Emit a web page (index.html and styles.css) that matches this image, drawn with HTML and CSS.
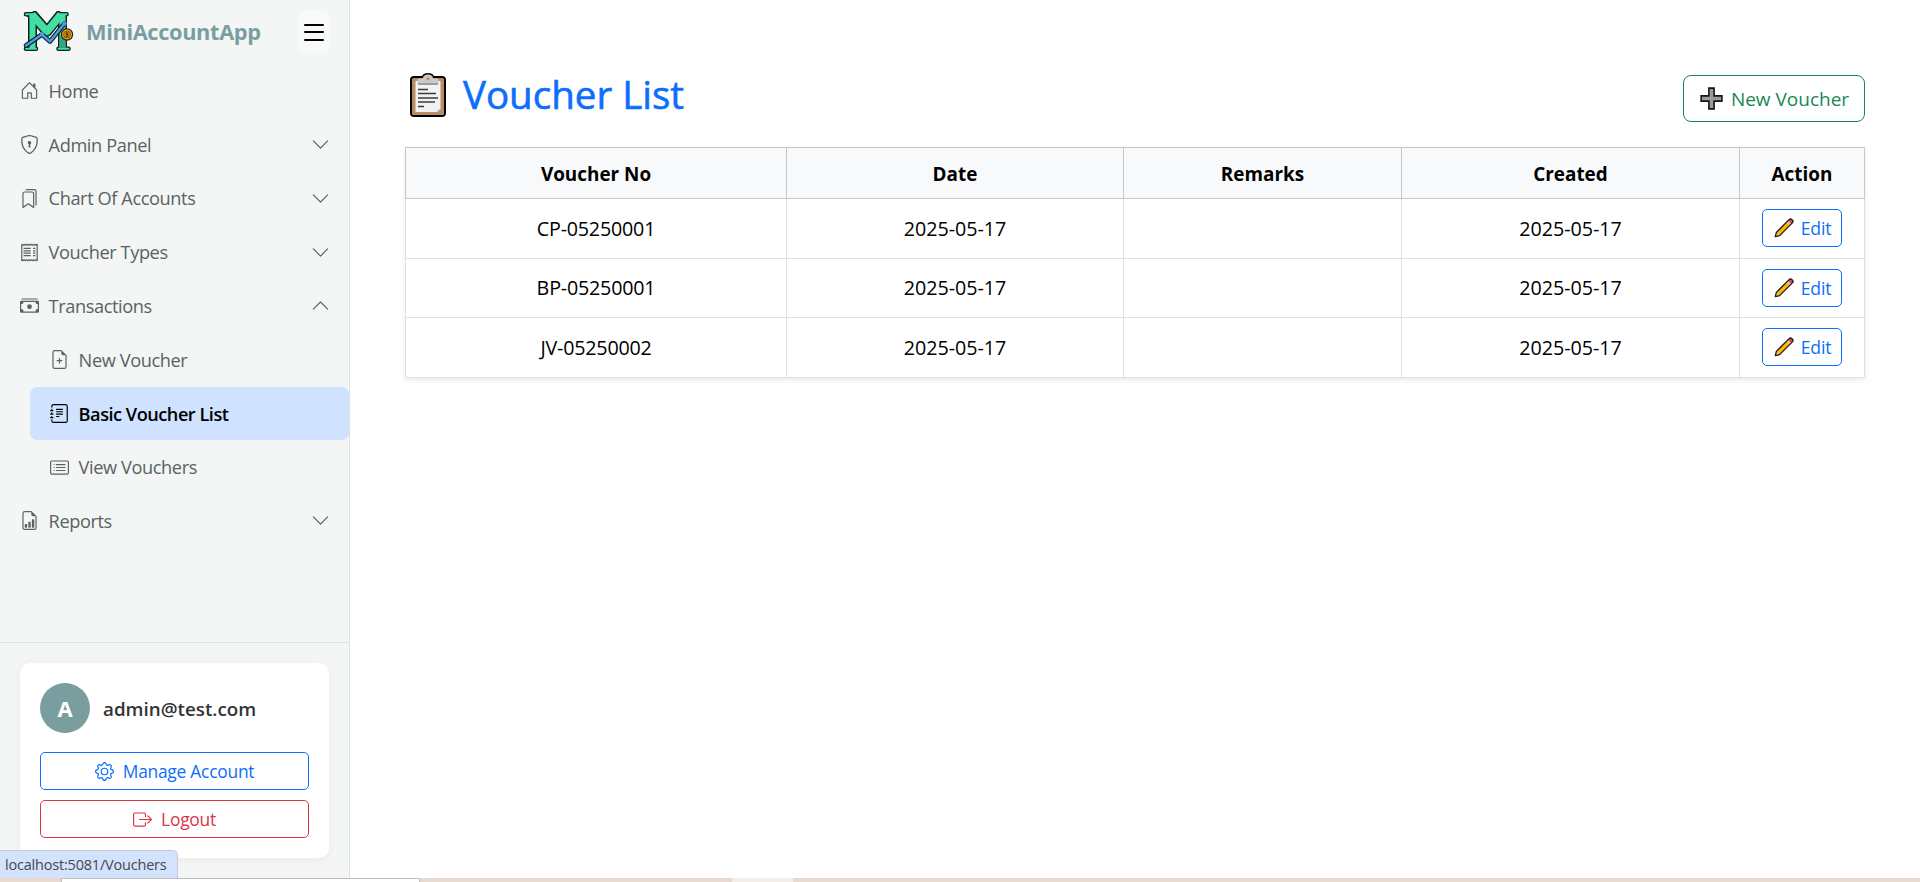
FILE: index.html
```html
<!DOCTYPE html>
<html lang="en">
<head>
<meta charset="utf-8">
<title>Voucher List - MiniAccountApp</title>
<link rel="stylesheet" href="styles.css">
</head>
<body>
<svg class="sprite" aria-hidden="true">
  <symbol id="i-home" viewBox="0 0 16 16"><path d="M8.354 1.146a.5.5 0 0 0-.708 0l-6 6A.5.5 0 0 0 1.5 7.5v7a.5.5 0 0 0 .5.5h4.5a.5.5 0 0 0 .5-.5v-4h2v4a.5.5 0 0 0 .5.5H14a.5.5 0 0 0 .5-.5v-7a.5.5 0 0 0-.146-.354L13 5.793V2.5a.5.5 0 0 0-.5-.5h-1a.5.5 0 0 0-.5.5v1.293zM2.5 14V7.707l5.5-5.5 5.5 5.5V14H10v-4a.5.5 0 0 0-.5-.5h-3a.5.5 0 0 0-.5.5v4z"/></symbol>
  <symbol id="i-shield" viewBox="0 0 16 16"><path d="M5.338 1.59a61 61 0 0 0-2.837.856.48.48 0 0 0-.328.39c-.554 4.157.726 7.19 2.253 9.188a10.7 10.7 0 0 0 2.287 2.233c.346.244.652.42.893.533q.18.085.293.118a1 1 0 0 0 .101.025 1 1 0 0 0 .1-.025q.114-.034.294-.118c.24-.113.547-.29.893-.533a10.7 10.7 0 0 0 2.287-2.233c1.527-1.997 2.807-5.031 2.253-9.188a.48.48 0 0 0-.328-.39c-.651-.213-1.75-.56-2.837-.855C9.552 1.29 8.531 1.067 8 1.067c-.53 0-1.552.223-2.662.524zM5.072.56C6.157.265 7.31 0 8 0s1.843.265 2.928.56c1.11.3 2.229.655 2.887.87a1.54 1.54 0 0 1 1.044 1.262c.596 4.477-.787 7.795-2.465 9.99a11.8 11.8 0 0 1-2.517 2.453 7 7 0 0 1-1.048.625c-.28.132-.581.24-.829.24s-.548-.108-.829-.24a7 7 0 0 1-1.048-.625 11.8 11.8 0 0 1-2.517-2.453C1.928 10.487.545 7.169 1.141 2.692A1.54 1.54 0 0 1 2.185 1.43 63 63 0 0 1 5.072.56"/><path d="M9.5 6.5a1.5 1.5 0 0 1-1 1.415l.385 1.99a.5.5 0 0 1-.491.595h-.788a.5.5 0 0 1-.49-.595l.384-1.99a1.5 1.5 0 1 1 2-1.415"/></symbol>
  <symbol id="i-bookmarks" viewBox="0 0 16 16"><path d="M2 4a2 2 0 0 1 2-2h6a2 2 0 0 1 2 2v11.5a.5.5 0 0 1-.777.416L7 13.101l-4.223 2.815A.5.5 0 0 1 2 15.5zm2-1a1 1 0 0 0-1 1v10.566l3.723-2.482a.5.5 0 0 1 .554 0L11 14.566V4a1 1 0 0 0-1-1z"/><path d="M4.268 1H12a1 1 0 0 1 1 1v11.768l.223.148A.5.5 0 0 0 14 13.5V2a2 2 0 0 0-2-2H6a2 2 0 0 0-1.732 1"/></symbol>
  <symbol id="i-receipt" viewBox="0 0 16 16"><path fill="none" stroke="currentColor" stroke-linejoin="round" d="M1.5 1.2l1 .8 1-.9 1 .9 1-.9 1 .9 1-.9 1 .9 1-.9 1 .9 1-.9 1 .9 1-.9.5.8.5-.7v13.6l-1-.8-1 .9-1-.9-1 .9-1-.9-1 .9-1-.9-1 .9-1-.9-1 .9-1-.9-1 .9-.5-.7-.5.6z"/><path d="M3 4h6v1.100H3zM3 6h6v1.100H3zM3 8h6v1.100H3zM3 10h6v1.100H3zM11 4h2v1.100h-2zM11 6h2v1.100h-2zM11 8h2v1.100h-2zM11 10h2v1.100h-2z"/></symbol>
  <symbol id="i-cash" viewBox="0 0 16 16"><path d="M1 3a1 1 0 0 1 1-1h12a1 1 0 0 1 1 1zm7 8a2 2 0 1 0 0-4 2 2 0 0 0 0 4"/><path d="M0 5a1 1 0 0 1 1-1h14a1 1 0 0 1 1 1v8a1 1 0 0 1-1 1H1a1 1 0 0 1-1-1zm3 0a2 2 0 0 1-2 2v4a2 2 0 0 1 2 2h10a2 2 0 0 1 2-2V7a2 2 0 0 1-2-2z"/></symbol>
  <symbol id="i-file-plus" viewBox="0 0 16 16"><path d="M8 6.5a.5.5 0 0 1 .5.5v1.5H10a.5.5 0 0 1 0 1H8.5V11a.5.5 0 0 1-1 0V9.5H6a.5.5 0 0 1 0-1h1.5V7a.5.5 0 0 1 .5-.5"/><path d="M14 4.5V14a2 2 0 0 1-2 2H4a2 2 0 0 1-2-2V2a2 2 0 0 1 2-2h5.5zm-3 0A1.5 1.5 0 0 1 9.5 3V1H4a1 1 0 0 0-1 1v12a1 1 0 0 0 1 1h8a1 1 0 0 0 1-1V4.5z"/></symbol>
  <symbol id="i-journal" viewBox="0 0 16 16"><path d="M5 10.5a.5.5 0 0 1 .5-.5h2a.5.5 0 0 1 0 1h-2a.5.5 0 0 1-.5-.5m0-2a.5.5 0 0 1 .5-.5h5a.5.5 0 0 1 0 1h-5a.5.5 0 0 1-.5-.5m0-2a.5.5 0 0 1 .5-.5h5a.5.5 0 0 1 0 1h-5a.5.5 0 0 1-.5-.5m0-2a.5.5 0 0 1 .5-.5h5a.5.5 0 0 1 0 1h-5a.5.5 0 0 1-.5-.5"/><path d="M3 0h10a2 2 0 0 1 2 2v12a2 2 0 0 1-2 2H3a2 2 0 0 1-2-2v-1h1v1a1 1 0 0 0 1 1h10a1 1 0 0 0 1-1V2a1 1 0 0 0-1-1H3a1 1 0 0 0-1 1v1H1V2a2 2 0 0 1 2-2"/><path d="M1 5v-.5a.5.5 0 0 1 1 0V5h.5a.5.5 0 0 1 0 1h-2a.5.5 0 0 1 0-1zm0 3v-.5a.5.5 0 0 1 1 0V8h.5a.5.5 0 0 1 0 1h-2a.5.5 0 0 1 0-1zm0 3v-.5a.5.5 0 0 1 1 0v.5h.5a.5.5 0 0 1 0 1h-2a.5.5 0 0 1 0-1z"/></symbol>
  <symbol id="i-card-list" viewBox="0 0 16 16"><rect x=".5" y="2.5" width="15" height="11" rx="1" fill="none" stroke="currentColor"/><path d="M5 5h8v1H5zM5 7.5h8v1H5zM5 10h8v1H5z"/><circle cx="3.5" cy="5.5" r=".5"/><circle cx="3.5" cy="8" r=".5"/><circle cx="3.5" cy="10.5" r=".5"/></symbol>
  <symbol id="i-report" viewBox="0 0 16 16"><path d="M10 13.5a.5.5 0 0 0 .5.5h1a.5.5 0 0 0 .5-.5v-6a.5.5 0 0 0-.5-.5h-1a.5.5 0 0 0-.5.5zm-2.5.5a.5.5 0 0 1-.5-.5v-4a.5.5 0 0 1 .5-.5h1a.5.5 0 0 1 .5.5v4a.5.5 0 0 1-.5.5zm-3 0a.5.5 0 0 1-.5-.5v-2a.5.5 0 0 1 .5-.5h1a.5.5 0 0 1 .5.5v2a.5.5 0 0 1-.5.5z"/><path d="M14 14V4.5L9.5 0H4a2 2 0 0 0-2 2v12a2 2 0 0 0 2 2h8a2 2 0 0 0 2-2M9.5 3A1.5 1.5 0 0 0 11 4.5h2V14a1 1 0 0 1-1 1H4a1 1 0 0 1-1-1V2a1 1 0 0 1 1-1h5.500z"/></symbol>
  <symbol id="i-down" viewBox="0 0 16 16"><path d="M1.646 4.646a.5.5 0 0 1 .708 0L8 10.293l5.646-5.647a.5.5 0 0 1 .708.708l-6 6a.5.5 0 0 1-.708 0l-6-6a.5.5 0 0 1 0-.708"/></symbol>
  <symbol id="i-gear" viewBox="0 0 16 16"><path d="M8 4.754a3.246 3.246 0 1 0 0 6.492 3.246 3.246 0 0 0 0-6.492M5.754 8a2.246 2.246 0 1 1 4.492 0 2.246 2.246 0 0 1-4.492 0"/><path d="M9.796 1.343c-.527-1.79-3.065-1.79-3.592 0l-.094.319a.873.873 0 0 1-1.255.52l-.292-.16c-1.64-.892-3.433.902-2.54 2.541l.159.292a.873.873 0 0 1-.52 1.255l-.319.094c-1.79.527-1.79 3.065 0 3.592l.319.094a.873.873 0 0 1 .52 1.255l-.16.292c-.892 1.64.901 3.434 2.541 2.54l.292-.159a.873.873 0 0 1 1.255.52l.094.319c.527 1.79 3.065 1.79 3.592 0l.094-.319a.873.873 0 0 1 1.255-.52l.292.16c1.64.893 3.434-.902 2.54-2.541l-.159-.292a.873.873 0 0 1 .52-1.255l.319-.094c1.79-.527 1.79-3.065 0-3.592l-.319-.094a.873.873 0 0 1-.52-1.255l.16-.292c.893-1.64-.902-3.433-2.541-2.54l-.292.159a.873.873 0 0 1-1.255-.52zm-2.633.283c.246-.835 1.428-.835 1.674 0l.094.319a1.873 1.873 0 0 0 2.693 1.115l.291-.16c.764-.415 1.6.42 1.184 1.185l-.159.292a1.873 1.873 0 0 0 1.116 2.692l.318.094c.835.246.835 1.428 0 1.674l-.319.094a1.873 1.873 0 0 0-1.115 2.693l.16.291c.415.764-.42 1.6-1.185 1.184l-.291-.159a1.873 1.873 0 0 0-2.693 1.116l-.094.318c-.246.835-1.428.835-1.674 0l-.094-.319a1.873 1.873 0 0 0-2.692-1.115l-.292.16c-.764.415-1.6-.42-1.184-1.185l.159-.291A1.873 1.873 0 0 0 1.945 8.93l-.319-.094c-.835-.246-.835-1.428 0-1.674l.319-.094A1.873 1.873 0 0 0 3.06 4.377l-.16-.292c-.415-.764.42-1.6 1.185-1.184l.292.159a1.873 1.873 0 0 0 2.692-1.115z"/></symbol>
  <symbol id="i-logout" viewBox="0 0 16 16"><path d="M10 12.500a.5.5 0 0 1-.5.5h-8a.5.5 0 0 1-.5-.5v-9a.5.5 0 0 1 .5-.5h8a.5.5 0 0 1 .5.5v2a.5.5 0 0 0 1 0v-2A1.5 1.5 0 0 0 9.500 2h-8A1.500 1.500 0 0 0 0 3.500v9A1.500 1.500 0 0 0 1.500 14h8a1.500 1.500 0 0 0 1.500-1.500v-2a.5.5 0 0 0-1 0z"/><path d="M15.854 8.354a.5.5 0 0 0 0-.708l-3-3a.5.5 0 0 0-.708.708L14.293 7.500H5.500a.5.5 0 0 0 0 1h8.793l-2.147 2.146a.5.5 0 0 0 .708.708z"/></symbol>
  <symbol id="i-pencil" viewBox="0 0 20 20"><g transform="rotate(-45 10 10)"><path d="M-2.300 10L1.500 7.700H19.500a2 2 0 0 1 2 2v.6a2 2 0 0 1-2 2H1.500z" fill="#fdb900"/><path d="M-2.300 10L1.500 7.700v4.600z" fill="#e8c9a8"/><path d="M16 7.700h2v4.600h-2z" fill="#d0d0d0"/><path d="M18 7.700h1.500a2 2 0 0 1 2 2v.6a2 2 0 0 1-2 2H18z" fill="#e74856"/><path d="M-2.300 10L1.500 7.700H19.500a2 2 0 0 1 2 2v.6a2 2 0 0 1-2 2H1.500z" fill="none" stroke="#1b1b1b" stroke-width="1.300" stroke-linejoin="round"/></g></symbol>
</svg>

<div class="app">
  <aside class="sidebar">
    <header class="brand-bar">
      <svg class="logo" viewBox="0 0 52 42">
        <g fill="none" stroke="#14201c" stroke-linejoin="round">
          <path d="M10.500 4v35M40.500 4v35" stroke-width="9"/>
          <path d="M9 2L25 20.500 40 2" stroke-width="10.500"/>
          <path d="M4 3.300h8M38 3.300h6.500M4 37.800h10M36.500 37.800h10" stroke-width="4.600" stroke-linecap="round"/>
        </g>
        <g fill="none" stroke="#40e0a3" stroke-linejoin="round">
          <path d="M10.500 3.500v34.500M40.500 3.500v34.500" stroke-width="6"/>
          <path d="M10 3.500L25 20.500 39 3.500" stroke-width="7.500"/>
          <path d="M4 3.300h8M38 3.300h6.500M4 37.800h10M36.500 37.800h10" stroke-width="2" stroke-linecap="round"/>
        </g>
        <path d="M37.500 24v13h6V29z" fill="#31a884"/>
        <path d="M4 34.500L20 23.500l8 7L42.500 12.500" fill="none" stroke="#101d2c" stroke-width="4.600" stroke-linecap="round" stroke-linejoin="round"/>
        <path d="M4 34.500L20 23.500l8 7L42.500 12.500" fill="none" stroke="#4a9de0" stroke-width="2.500" stroke-linecap="round" stroke-linejoin="round"/>
        <circle cx="20" cy="23" r="2" fill="#4a9de0"/><circle cx="42.500" cy="12.500" r="2.200" fill="#4a9de0"/>
        <circle cx="45" cy="23.500" r="5.600" fill="#f0ad1c" stroke="#2b2410" stroke-width="1.200"/>
        <circle cx="45" cy="23.500" r="3.500" fill="#d6920c" stroke="#6b4a05" stroke-width=".8"/>
        <path d="M46.500 22h-2.300q-1 .8 0 1.500h1.600q1 .7 0 1.600h-2.300M45 21v5" fill="none" stroke="#3c2b05" stroke-width=".8"/>
      </svg>
      <span class="brand">MiniAccountApp</span>
      <button class="menu-toggle" aria-label="Menu"><span class="bar"></span><span class="bar"></span><span class="bar"></span></button>
    </header>

    <nav class="nav">
      <a class="item"><svg class="icon"><use href="#i-home"/></svg><span>Home</span></a>
      <a class="item"><svg class="icon"><use href="#i-shield"/></svg><span>Admin Panel</span><svg class="icon chevron"><use href="#i-down"/></svg></a>
      <a class="item"><svg class="icon"><use href="#i-bookmarks"/></svg><span>Chart Of Accounts</span><svg class="icon chevron"><use href="#i-down"/></svg></a>
      <a class="item"><svg class="icon"><use href="#i-receipt"/></svg><span>Voucher Types</span><svg class="icon chevron"><use href="#i-down"/></svg></a>
      <a class="item"><svg class="icon"><use href="#i-cash"/></svg><span>Transactions</span><svg class="icon chevron open"><use href="#i-down"/></svg></a>
      <div class="submenu">
        <a class="item"><svg class="icon"><use href="#i-file-plus"/></svg><span>New Voucher</span></a>
        <a class="item active"><svg class="icon"><use href="#i-journal"/></svg><span>Basic Voucher List</span></a>
        <a class="item"><svg class="icon"><use href="#i-card-list"/></svg><span>View Vouchers</span></a>
      </div>
      <a class="item"><svg class="icon"><use href="#i-report"/></svg><span>Reports</span><svg class="icon chevron"><use href="#i-down"/></svg></a>
    </nav>

    <footer class="account">
      <div class="card">
        <div class="user"><span class="avatar">A</span><span class="email">admin@test.com</span></div>
        <button class="btn btn-primary"><svg class="icon"><use href="#i-gear"/></svg><span>Manage Account</span></button>
        <button class="btn btn-danger"><svg class="icon"><use href="#i-logout"/></svg><span>Logout</span></button>
      </div>
    </footer>
  </aside>

  <main class="content">
    <div class="title-row">
      <h1 class="title">
        <svg class="clipboard" viewBox="0 0 38 46">
          <path d="M5 4h8c1-2 3-3 6-3s5 1 6 3h8q4 0 4 4v33q0 4-4 4H5q-4 0-4-4V8q0-4 4-4z" fill="#000"/>
          <rect x="3" y="6" width="32" height="37" rx="1.500" fill="#b98d63"/>
          <path d="M6.500 9h25v28.500l-3 2.500h-22z" fill="#f2f2f2"/>
          <path d="M31.500 37.500h-3V40z" fill="#cbb29b"/>
          <path d="M8.500 11V8.500q0-2 2-2h3.500C14 3.500 16.500 2.500 19 2.500s5 1 5 4h3.500q2 0 2 2V11z" fill="#c9c9c9"/>
          <circle cx="19" cy="6.800" r="1.500" fill="#b98d63"/>
          <path d="M9 12h20" stroke="#666" stroke-width="1.200"/>
          <path d="M9 17.500h10M9 21.500h18M9 26h20M9 30h17M9 34.500h6" stroke="#363c3c" stroke-width="1.500"/>
        </svg>
        <span>Voucher List</span>
      </h1>
      <button class="btn-new">
        <svg class="plus" viewBox="0 0 24 24"><path d="M9.300 1.200h5.400v8.100h8.100v5.400h-8.100v8.100H9.300v-8.100H1.200V9.300h8.100z" fill="#9b9b9b" stroke="#161616" stroke-width="1.700"/></svg>
        <span>New Voucher</span>
      </button>
    </div>

    <table class="vouchers">
      <colgroup><col class="c-no"><col class="c-date"><col class="c-remarks"><col class="c-created"><col class="c-action"></colgroup>
      <thead><tr><th>Voucher No</th><th>Date</th><th>Remarks</th><th>Created</th><th>Action</th></tr></thead>
      <tbody>
        <tr><td class="code">CP-05250001</td><td>2025-05-17</td><td></td><td>2025-05-17</td><td><button class="btn-edit"><svg class="pencil"><use href="#i-pencil"/></svg><span>Edit</span></button></td></tr>
        <tr><td class="code">BP-05250001</td><td>2025-05-17</td><td></td><td>2025-05-17</td><td><button class="btn-edit"><svg class="pencil"><use href="#i-pencil"/></svg><span>Edit</span></button></td></tr>
        <tr><td class="code">JV-05250002</td><td>2025-05-17</td><td></td><td>2025-05-17</td><td><button class="btn-edit"><svg class="pencil"><use href="#i-pencil"/></svg><span>Edit</span></button></td></tr>
      </tbody>
    </table>
  </main>
</div>

<div class="desktop-edge"><span class="window-edge"></span><span class="highlight"></span></div>
<div class="status">localhost:5081/Vouchers</div>
</body>
</html>
```
FILE: styles.css
```css
* { box-sizing: border-box; }

body {
  margin: 0;
  height: 882px;
  overflow: hidden;
  display: flex;
  flex-direction: column;
  background: #fff;
  color: #000;
  font-family: "Open Sans", "Noto Sans", sans-serif;
  font-size: 19px;
}

button { font: inherit; background: #fff; margin: 0; padding: 0; }
.sprite { display: none; }
.icon { width: 19px; height: 19px; fill: currentColor; flex: none; }

.app { display: flex; height: 878px; flex: none; }

/* Sidebar */
.sidebar {
  width: 350px;
  flex: none;
  display: flex;
  flex-direction: column;
  background: #f3f6f5;
  border-right: 1px solid #dee2e6;
}
.brand-bar {
  height: 64px;
  flex: none;
  display: flex;
  align-items: center;
  padding: 0 20px 0 22px;
}
.logo { width: 52px; height: 42px; }
.brand {
  margin-left: 12px;
  padding-bottom: 2px;
  color: #7a9e9f;
  font-size: 21.800px;
  font-weight: 700;
  letter-spacing: -.37px;
}
.menu-toggle {
  width: 30px;
  height: 45px;
  margin-left: auto;
  border: 0;
  border-radius: 8px;
  background: #f8f9fa;
  display: flex;
  flex-direction: column;
  align-items: center;
  justify-content: center;
  gap: 5.500px;
}
.bar { width: 20px; height: 2px; background: #000; border-radius: 1px; }

.nav { flex: 1; }
.item {
  height: 53.750px;
  display: flex;
  align-items: center;
  gap: 9.600px;
  padding: 0 19px 0 20px;
  color: #5a6361;
  font-size: 18.200px;
  letter-spacing: -.4px;
}
.item span { white-space: nowrap; }
.chevron { margin-left: auto; }
.open { transform: rotate(180deg); }
.submenu { padding-left: 30px; }
.active {
  background: #cfe2ff;
  border-radius: 7px;
  color: #000;
  font-weight: 600;
  letter-spacing: -.5px;
}
.active span { padding-top: 1px; }

.account { border-top: 1px solid #dee2e6; padding: 20px 20px 20px; }
.card {
  height: 195px;
  border-radius: 10px;
  padding: 20px;
  background: #fff;
  box-shadow: 0 2px 10px rgba(0, 0, 0, .05);
}
.user { display: flex; align-items: center; gap: 13px; height: 50px; margin-bottom: 19px; }
.avatar {
  width: 50px;
  height: 50px;
  border-radius: 50%;
  background: #7a9e9f;
  color: #fff;
  font-size: 22px;
  font-weight: 700;
  display: flex;
  align-items: center;
  justify-content: center;
}
.email { padding-top: 1px; color: #333; font-weight: 600; font-size: 18.800px; }
.btn {
  width: 100%;
  height: 38px;
  margin-bottom: 10px;
  border: 1px solid;
  border-radius: 5px;
  display: flex;
  align-items: center;
  justify-content: center;
  gap: 9px;
  font-size: 17.400px;
  letter-spacing: -.25px;
}
.btn-primary { color: #0d6efd; }
.btn-danger { color: #dc3545; }

/* Main area */
.content { flex: 1; padding: 70px 56px 0 55px; }
.title-row { display: flex; justify-content: space-between; align-items: flex-start; height: 77px; }
.title {
  margin: 0;
  padding-left: 4px;
  height: 50px;
  display: flex;
  align-items: center;
  gap: 16px;
  color: #0d6efd;
  font-size: 38.500px;
  font-weight: 500;
  line-height: 48px;
  -webkit-text-stroke: .6px #0d6efd;
}
.title span { padding-bottom: 2px; }
.clipboard { width: 38px; height: 46px; }
.btn-new {
  width: 182px;
  height: 47px;
  margin-top: 5px;
  padding-left: 1px;
  border: 1px solid #198754;
  border-radius: 8px;
  color: #198754;
  display: flex;
  align-items: center;
  justify-content: center;
  gap: 8px;
}
.plus { width: 23px; height: 23px; }

.vouchers {
  width: 1459px;
  table-layout: fixed;
  border-collapse: collapse;
  text-align: center;
  box-shadow: 0 2px 5px rgba(0, 0, 0, .09);
}
.c-no { width: 381px; }
.c-date { width: 337px; }
.c-remarks { width: 278px; }
.c-created { width: 338px; }
.c-action { width: 125px; }
.vouchers th {
  height: 51px;
  padding: 1px 0 0;
  border: 1px solid #c6c7c8;
  background: #f8f9fa;
  font-weight: 700;
  font-size: 18.900px;
}
.vouchers td {
  height: 59.500px;
  padding: 0;
  border: 1px solid #dee2e6;
  font-size: 19.700px;
}
.vouchers .code { letter-spacing: -.2px; }
.btn-edit {
  width: 80px;
  height: 38px;
  margin: 0 auto;
  padding-left: 1px;
  border: 1px solid #0d6efd;
  border-radius: 5px;
  color: #0d6efd;
  font-size: 17.600px;
  letter-spacing: -.2px;
  display: flex;
  align-items: center;
  justify-content: center;
  gap: 7px;
}
.pencil { width: 20px; height: 20px; }

/* Strip along the bottom of the window */
.desktop-edge { height: 4px; flex: none; display: flex; background: #e8dad0; }
.window-edge { width: 359px; margin-left: 61px; background: #fff; border: 1px solid #bfbfbf; border-bottom: 0; }
.highlight { width: 61px; margin-left: 312px; background: #f5ede8; }

/* Link target bubble over the page */
.status {
  position: absolute;
  left: 0;
  bottom: 4px;
  width: 178px;
  height: 28px;
  padding-left: 5px;
  line-height: 28px;
  font-size: 14.500px;
  letter-spacing: -.2px;
  color: #47484b;
  background: #d3e3fd;
  border: solid #c5cbd6;
  border-width: 1px 1px 0 0;
  border-radius: 0 5px 0 0;
}
```
